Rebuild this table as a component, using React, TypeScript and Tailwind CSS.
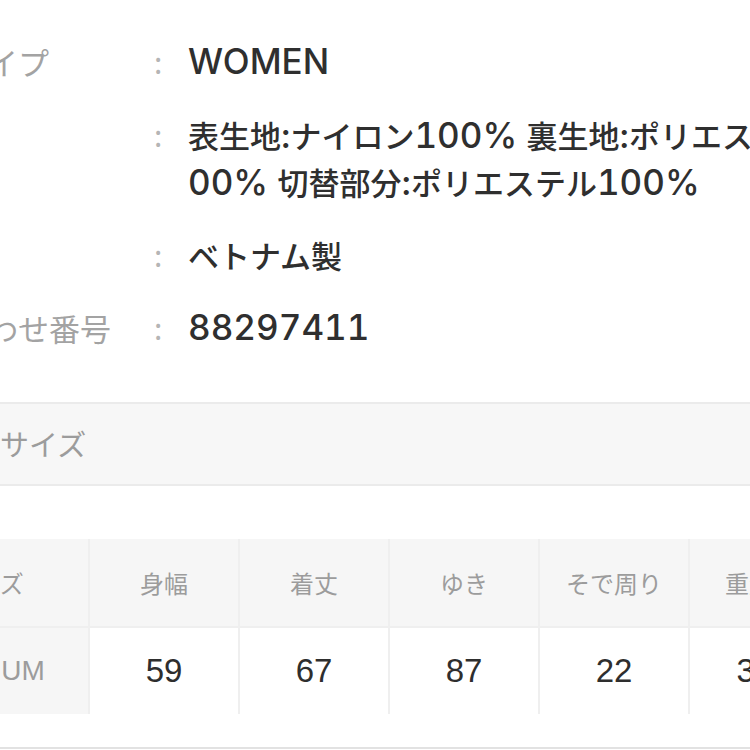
import React from "react";

const rows: { label: string; lines: string[] }[] = [
  { label: "モデルタイプ", lines: ["WOMEN"] },
  { label: "素材", lines: ["表生地:ナイロン100% 裏生地:ポリエステル1", "00% 切替部分:ポリエステル100%"] },
  { label: "原産国", lines: ["ベトナム製"] },
  { label: "お問い合わせ番号", lines: ["88297411"] },
];

const headers = ["身幅", "着丈", "ゆき", "そで周り", "重量(g)"];
const values = ["59", "67", "87", "22", "330"];

// latin runs get a wider face, CJK runs stay in Noto
function Mixed({ text }: { text: string }) {
  const parts = text.match(/[\x00-\x7F]+|[^\x00-\x7F]+/g) ?? [];
  return (
    <>
      {parts.map((p, i) =>
        /^[\x00-\x7F]/.test(p) ? (
          <span key={i} className="font-['Inter'] text-[35px] tabular-nums">{p}</span>
        ) : (
          <span key={i} className="text-[31px]">{p}</span>
        )
      )}
    </>
  );
}

export default function App() {
  return (
    <div className="relative h-[750px] w-[750px] overflow-hidden bg-white font-['Noto_Sans_CJK_JP',sans-serif]">
      {/* Spec rows */}
      <div className="flex flex-col gap-[26px] pt-[38px]">
        {rows.map((row) => (
          <div key={row.label} className="flex items-start leading-[47px]">
            <div className="ml-[-137px] w-[289px] shrink-0 whitespace-nowrap text-[31px] text-[#a3a3a3]">{row.label}</div>
            <div className="w-[36px] shrink-0 pl-[2px] text-[30px] text-[#b5b5b5]">:</div>
            <div className="flex flex-col whitespace-nowrap font-medium text-[#2f2f2f]">
              {row.lines.map((line) => (
                <div key={line} className="h-[47px]">
                  <Mixed text={line} />
                </div>
              ))}
            </div>
          </div>
        ))}
      </div>

      {/* Size heading band */}
      <div className="mt-[51px] flex h-[84px] items-center border-y-2 border-[#ebebeb] bg-[#f7f7f7]">
        <span className="text-[29px] text-[#9c9c9c]">サイズ</span>
      </div>

      {/* Size table */}
      <div className="mt-[53px] ml-[-112px] grid w-max grid-cols-[200px_repeat(5,148px)] gap-[2px] bg-[#efefef]">
        <div className="flex h-[87px] items-center justify-center bg-[#f6f6f6] text-[24px] text-[#9c9c9c]">サイズ</div>
        {headers.map((h) => (
          <div key={h} className="flex h-[87px] items-center justify-center bg-[#f6f6f6] text-[24px] text-[#9c9c9c]">{h}</div>
        ))}
        <div className="flex h-[86px] items-center justify-center bg-[#f6f6f6] font-['Liberation_Sans'] text-[28px] text-[#9c9c9c]">MEDIUM</div>
        {values.map((v) => (
          <div key={v} className="flex h-[86px] items-center justify-center bg-white font-['Liberation_Sans'] text-[33px] text-[#2e2e2e]">{v}</div>
        ))}
      </div>

      <div className="mt-[33px] border-t-2 border-[#e2e2e2]" />
    </div>
  );
}
